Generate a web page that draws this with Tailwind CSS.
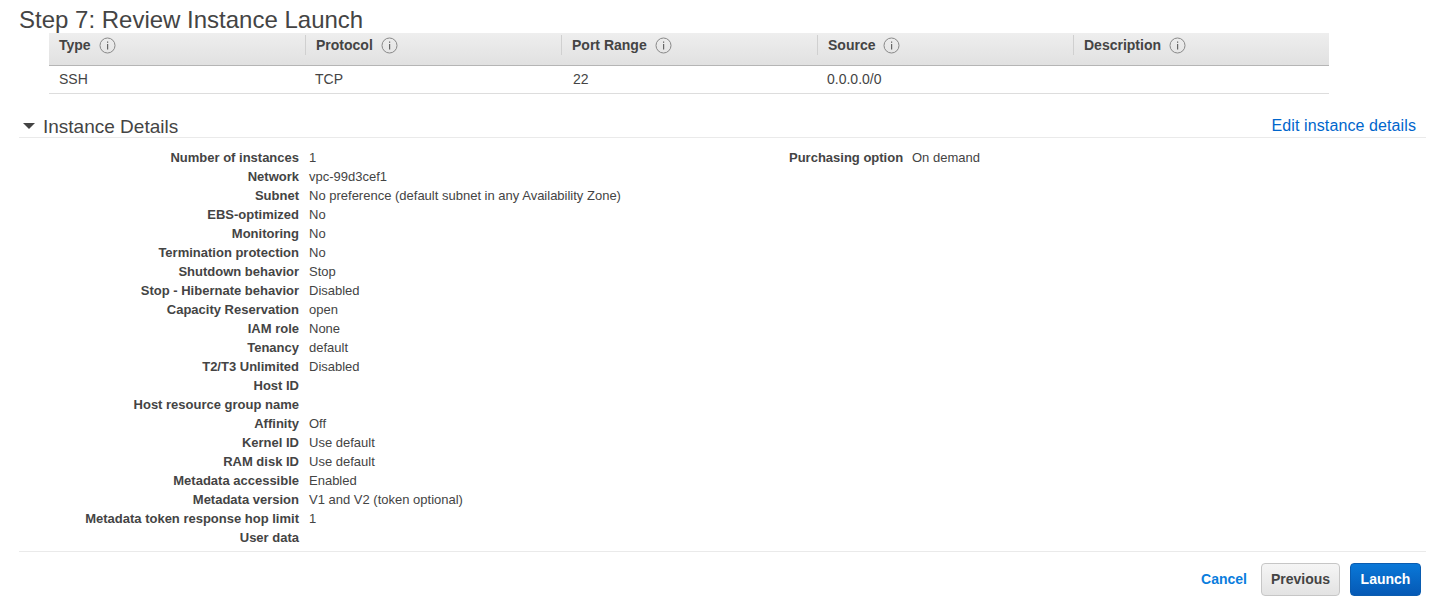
<!DOCTYPE html>
<html>
<head>
    <meta name="viewport" content="width=device-width, initial-scale=1.0">
    <script src="https://cdn.jsdelivr.net/npm/@tailwindcss/browser@4"></script>
    <title>Step 7: Review Instance Launch</title>
</head>
<body class="bg-white text-[#444] font-['Liberation_Sans',Arial,sans-serif] h-[611px] overflow-hidden">
    <div class="pl-[19px] pr-[14px]">
        <h1 class="text-[24px] leading-[33px] h-[33px] pt-[3px] text-[#444]">Step 7: Review Instance Launch</h1>

        <!-- security group table -->
        <div class="ml-[30px] w-[1280px]">
            <div class="grid grid-cols-5 h-[33px] items-start pt-[2px] bg-gradient-to-b from-[#eeeeee] to-[#e1e1e1] border-b border-[#b5b5b5] text-[14px] font-bold text-[#444]">
                <div class="flex items-center gap-[8px] pl-[10px] h-[20px]">Type <svg class="w-[17px] h-[17px]" viewBox="0 0 17 17"><circle cx="8.5" cy="8.5" r="7.5" fill="none" stroke="#888" /><rect x="8" y="7" width="1.200" height="5.500" fill="#666" /><rect x="8" y="4.500" width="1.200" height="1.300" fill="#666" /></svg></div>
                <div class="flex items-center gap-[8px] pl-[10px] h-[20px] border-l border-[#d0d0d0]">Protocol <svg class="w-[17px] h-[17px]" viewBox="0 0 17 17"><circle cx="8.5" cy="8.5" r="7.5" fill="none" stroke="#888" /><rect x="8" y="7" width="1.200" height="5.500" fill="#666" /><rect x="8" y="4.500" width="1.200" height="1.300" fill="#666" /></svg></div>
                <div class="flex items-center gap-[8px] pl-[10px] h-[20px] border-l border-[#d0d0d0]">Port Range <svg class="w-[17px] h-[17px]" viewBox="0 0 17 17"><circle cx="8.5" cy="8.5" r="7.5" fill="none" stroke="#888" /><rect x="8" y="7" width="1.200" height="5.500" fill="#666" /><rect x="8" y="4.500" width="1.200" height="1.300" fill="#666" /></svg></div>
                <div class="flex items-center gap-[8px] pl-[10px] h-[20px] border-l border-[#d0d0d0]">Source <svg class="w-[17px] h-[17px]" viewBox="0 0 17 17"><circle cx="8.5" cy="8.5" r="7.5" fill="none" stroke="#888" /><rect x="8" y="7" width="1.200" height="5.500" fill="#666" /><rect x="8" y="4.500" width="1.200" height="1.300" fill="#666" /></svg></div>
                <div class="flex items-center gap-[8px] pl-[10px] h-[20px] border-l border-[#d0d0d0]">Description <svg class="w-[17px] h-[17px]" viewBox="0 0 17 17"><circle cx="8.5" cy="8.5" r="7.5" fill="none" stroke="#888" /><rect x="8" y="7" width="1.200" height="5.500" fill="#666" /><rect x="8" y="4.500" width="1.200" height="1.300" fill="#666" /></svg></div>
            </div>
            <div class="grid grid-cols-5 h-[28px] items-center border-b border-[#dddddd] text-[14px] text-[#444]">
                <div class="pl-[10px]">SSH</div>
                <div class="pl-[10px]">TCP</div>
                <div class="pl-[12px]">22</div>
                <div class="pl-[10px]">0.0.0.0/0</div>
                <div></div>
            </div>
        </div>

        <!-- instance details -->
        <div class="mt-[20px] h-[24px] flex items-center border-b border-[#eaeaea]">
            <svg class="w-[12px] h-[6px] ml-[4px] mr-[8px]" viewBox="0 0 12 6"><path d="M0 0h12L6 6z" fill="#444" /></svg>
            <span class="text-[19px] text-[#444] leading-[24px] pt-[2px]">Instance Details</span>
            <a href="#" class="ml-auto mr-[10px] text-[16px] tracking-[0.1px] text-[#0066cc]">Edit instance details</a>
        </div>

        <div class="flex mt-[10px] text-[13px] leading-[19px] text-[#444]">
            <div class="grid grid-cols-[280px_1fr] gap-x-[10px] w-[770px]">
                <b class="text-right">Number of instances</b><span>1</span>
                <b class="text-right">Network</b><span>vpc-99d3cef1</span>
                <b class="text-right">Subnet</b><span>No preference (default subnet in any Availability Zone)</span>
                <b class="text-right">EBS-optimized</b><span>No</span>
                <b class="text-right">Monitoring</b><span>No</span>
                <b class="text-right">Termination protection</b><span>No</span>
                <b class="text-right">Shutdown behavior</b><span>Stop</span>
                <b class="text-right">Stop - Hibernate behavior</b><span>Disabled</span>
                <b class="text-right">Capacity Reservation</b><span>open</span>
                <b class="text-right">IAM role</b><span>None</span>
                <b class="text-right">Tenancy</b><span>default</span>
                <b class="text-right">T2/T3 Unlimited</b><span>Disabled</span>
                <b class="text-right">Host ID</b><span></span>
                <b class="text-right">Host resource group name</b><span></span>
                <b class="text-right">Affinity</b><span>Off</span>
                <b class="text-right">Kernel ID</b><span>Use default</span>
                <b class="text-right">RAM disk ID</b><span>Use default</span>
                <b class="text-right">Metadata accessible</b><span>Enabled</span>
                <b class="text-right">Metadata version</b><span>V1 and V2 (token optional)</span>
                <b class="text-right">Metadata token response hop limit</b><span>1</span>
                <b class="text-right">User data</b><span></span>
            </div>
            <div class="grid grid-cols-[113px_1fr] gap-x-[10px] h-[19px]">
                <b class="text-right whitespace-nowrap">Purchasing option</b><span>On demand</span>
            </div>
        </div>

        <!-- footer -->
        <div class="mt-[4px] border-t border-[#eaeaea] flex items-center justify-end h-[56px] pr-[5px] text-[14px] font-bold">
            <a href="#" class="text-[#0a7ddd] mr-[14px]">Cancel</a>
            <button class="w-[79px] h-[33px] rounded-[4px] border border-[#c6c6c6] bg-gradient-to-b from-[#f5f5f5] to-[#e3e3e3] text-[#444] mr-[10px]">Previous</button>
            <button class="w-[71px] h-[33px] rounded-[4px] border border-[#0a5cb0] bg-gradient-to-b from-[#0a78d8] to-[#0659b5] text-white">Launch</button>
        </div>
    </div>
</body>
</html>
